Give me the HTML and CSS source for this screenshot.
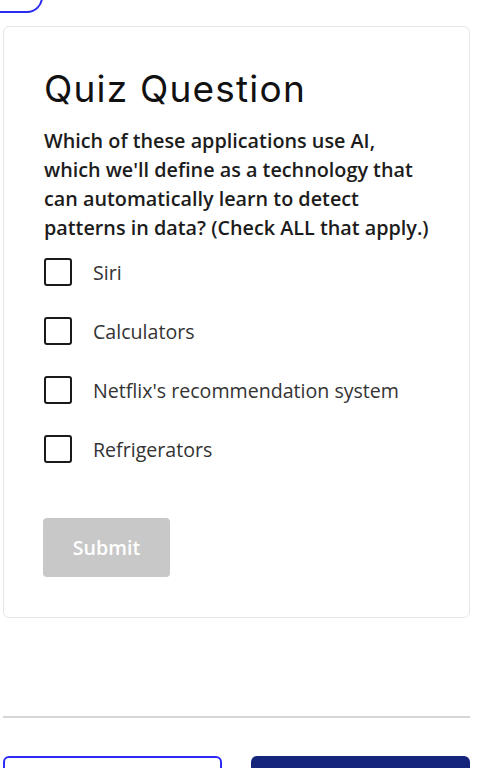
FILE: index.html
```html
<!DOCTYPE html>
<html lang="en">
<head>
    <meta charset="UTF-8">
    <meta name="viewport" content="width=device-width, initial-scale=1.0">
    <title>Quiz Question</title>
    <link rel="stylesheet" href="styles.css">
</head>
<body>
    <div class="page">
        <div class="top-button"></div>

        <div class="quiz-card">
            <h2>Quiz Question</h2>
            <p class="question">Which of these applications use AI, which we'll define as a technology that can automatically learn to detect patterns in data? (Check ALL that apply.)</p>

            <div class="options">
                <label class="option"><span class="box"></span>Siri</label>
                <label class="option"><span class="box"></span>Calculators</label>
                <label class="option"><span class="box"></span>Netflix's recommendation system</label>
                <label class="option"><span class="box"></span>Refrigerators</label>
            </div>

            <button class="submit" disabled>Submit</button>
        </div>

        <hr class="divider">

        <div class="nav-buttons">
            <button class="nav-prev"></button>
            <button class="nav-next"></button>
        </div>
    </div>
</body>
</html>
```

FILE: styles.css
```css
body {
    margin: 0;
    font-family: "Open Sans", "Noto Sans", sans-serif;
    color: #1a1a1a;
    background: #fff;
    overflow: hidden;
}
.page {
    width: 467px;
    margin-left: 3px;
}
.top-button {
    width: 60px;
    height: 42px;
    margin: -29px 0 0 -20px;
    border: 2px solid #2b2bf0;
    border-radius: 16px;
    box-sizing: border-box;
}
.quiz-card {
    margin-top: 13px;
    border: 1px solid #e6e6e6;
    border-radius: 6px;
    padding: 40px 40px 40px;
}
.quiz-card h2 {
    font-family: Inter, sans-serif;
    font-weight: 400;
    font-size: 37px;
    letter-spacing: 1.2px;
    line-height: 44px;
    margin: 0 0 15px;
    color: #111;
}
.question {
    font-size: 19.8px;
    font-weight: 600;
    line-height: 29px;
    margin: 0 0 16px;
    color: #1c1c1c;
}
.options {
    display: flex;
    flex-direction: column;
    gap: 31px;
}
.option {
    display: flex;
    align-items: center;
    gap: 21px;
    font-size: 19.6px;
    color: #333;
    height: 28px;
}
.box {
    width: 28px;
    height: 28px;
    box-sizing: border-box;
    border: 2px solid #1a1a1a;
    border-radius: 3px;
    flex: none;
}
.submit {
    display: block;
    margin-top: 55px;
    margin-left: -1px;
    width: 127px;
    height: 59px;
    border: none;
    border-radius: 4px;
    background: #c8c8c8;
    color: #fff;
    font-family: "Open Sans", sans-serif;
    font-size: 19.6px;
    font-weight: 600;
}
.divider {
    margin: 98px 0 0;
    border: none;
    border-top: 2px solid #d6d6d6;
}
.nav-buttons {
    display: flex;
    justify-content: space-between;
    margin-top: 38px;
}
.nav-buttons button {
    width: 219px;
    height: 50px;
    border-radius: 6px;
    box-sizing: border-box;
}
.nav-prev {
    background: #fff;
    border: 2px solid #2b2bf5;
}
.nav-next {
    background: #16257c;
    border: none;
}
```
